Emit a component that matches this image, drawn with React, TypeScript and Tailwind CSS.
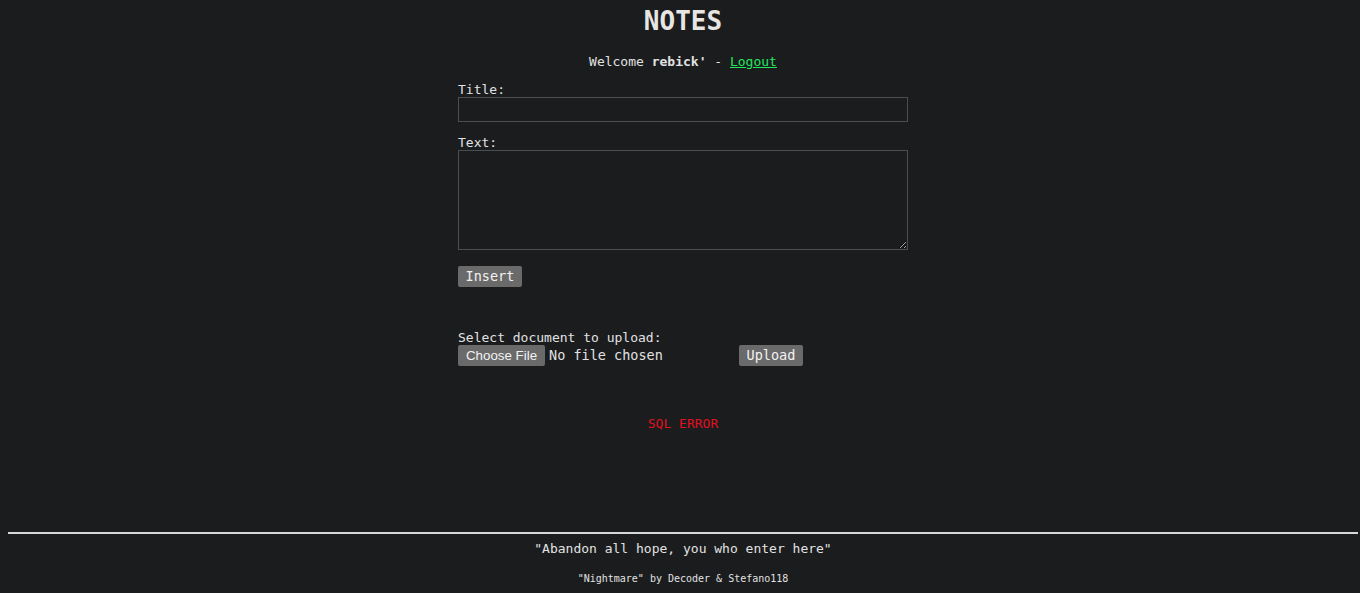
import React from 'react';

const mono = { fontFamily: '"DejaVu Sans Mono", monospace' };

export default function App() {
  return (
    <div className="min-h-[593px] bg-[#1b1c1e] text-[#e2e2e2] text-[13px]" style={mono}>
      <div className="ml-[8px] w-[1350px] pt-[6px]">
        {/* header */}
        <h1 className="h-[30px] text-center text-[26px] font-bold leading-[30px] text-[#e8e6e3]">NOTES</h1>
        <p className="mt-[18px] text-center leading-[15px]">
          Welcome <b>rebick'</b> - <a href="#" className="text-[#22e85e] underline">Logout</a>
        </p>

        {/* note form */}
        <form className="mx-auto w-[450px]" onSubmit={(e) => e.preventDefault()}>
          <label className="mt-[13px] block leading-[15px]">Title:</label>
          <input
            type="text"
            className="block h-[25px] w-[450px] border border-[#4b4e51] bg-[#1b1c1e] px-1 text-[#e2e2e2] outline-none"
          />
          <label className="mt-[13px] block leading-[15px]">Text:</label>
          <textarea className="block h-[100px] w-[450px] border border-[#4b4e51] bg-[#1b1c1e] px-1 text-[#e2e2e2] outline-none" />
          <button className="mt-[16px] block h-[21px] w-[64px] rounded-[2px] bg-[#6a6a6a] text-center text-[13.5px] leading-[21px] text-[#f2f2f2]">
            Insert
          </button>

          {/* upload */}
          <div className="mt-[43px] leading-[15px]">Select document to upload:</div>
          <div className="flex h-[21px] items-center">
            <div className="flex w-[281px] items-center">
              <span
                className="flex h-[21px] w-[87px] items-center justify-center rounded-[2px] bg-[#6a6a6a] text-[13.33px] text-[#f2f2f2]"
                style={{ fontFamily: '"Liberation Sans", Arial, sans-serif' }}
              >
                Choose File
              </span>
              <span className="ml-[4px] text-[13.5px]">No file chosen</span>
            </div>
            <button className="h-[21px] w-[64px] rounded-[2px] bg-[#6a6a6a] text-center text-[13.5px] leading-[21px] text-[#f2f2f2]">
              Upload
            </button>
          </div>
        </form>

        <p className="mt-[50px] text-center leading-[15px] text-[#e0101e]">SQL ERROR</p>

        {/* footer */}
        <hr className="mt-[101px] h-[2px] border-0 bg-[#d8d8d8]" />
        <p className="mt-[7px] text-center leading-[15px] text-[#e2e2e2]">"Abandon all hope, you who enter here"</p>
        <p className="mt-[17px] text-center text-[10px] leading-[12px] text-[#e2e2e2]">"Nightmare" by Decoder &amp; Stefano118</p>
      </div>
    </div>
  );
}
